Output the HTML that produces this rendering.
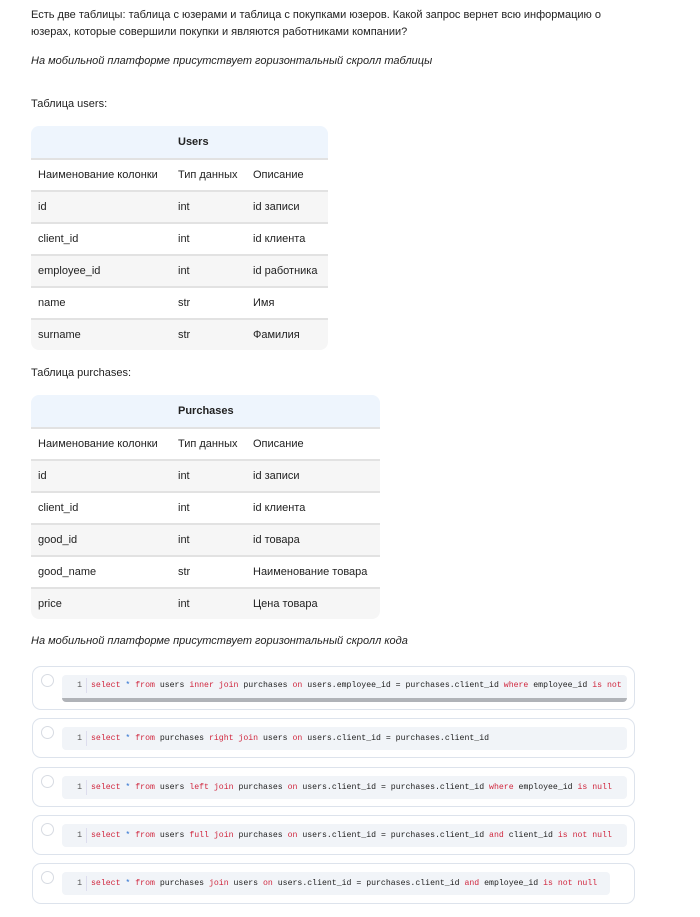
<!DOCTYPE html><html><head><meta charset="utf-8"><style>
body{margin:0;width:700px;height:917px;background:#fff;font-family:"Liberation Sans",sans-serif;color:#222;position:relative;overflow:hidden}
.t{position:absolute;font-size:11px;white-space:nowrap}
.i{font-style:italic}
.tbl{position:absolute;left:31px;border-radius:8px;overflow:hidden}
.row{position:relative;height:30px;border-top:2px solid #e2e2e2;font-size:11px}
.row span{position:absolute;top:9px}
.hd{height:32px;background:#eef5fd;border-top:none}
.hd span{font-weight:bold}
.g{background:#f6f6f6}
.card{position:absolute;left:32px;width:601px;border:1.5px solid #dde3ec;border-radius:9px;background:#fff}
.rad{position:absolute;left:8px;top:7px;width:11px;height:11px;border:1.5px solid #d7dbe2;border-radius:50%}
.code{position:absolute;left:29px;right:7px;top:8px;height:23px;background:#f1f4f8;border-radius:4px;font-family:"Liberation Mono",monospace;font-size:8.2px;line-height:23px;white-space:nowrap;overflow:hidden;color:#222}
.code .n{display:inline-block;width:20px;text-align:right;color:#555;padding-right:4px;border-right:1px solid #dde;margin-right:4px;line-height:15px}
.k{color:#d0263d}.s{color:#2a6fd0}
</style></head><body>
<div class="t" style="left:31px;top:7px;line-height:17px">Есть две таблицы: таблица с юзерами и таблица с покупками юзеров. Какой запрос вернет всю информацию о<br>юзерах, которые совершили покупки и являются работниками компании?</div>
<div class="t i" style="left:31px;top:55px">На мобильной платформе присутствует горизонтальный скролл таблицы</div>
<div class="t" style="left:31px;top:98px">Таблица users:</div>
<div class="tbl" style="top:126px;width:297px">
<div class="row hd"><span style="left:147px;top:10px">Users</span></div>
<div class="row"><span style="left:7px">Наименование колонки</span><span style="left:147px">Тип данных</span><span style="left:222px">Описание</span></div>
<div class="row g"><span style="left:7px">id</span><span style="left:147px">int</span><span style="left:222px">id записи</span></div>
<div class="row"><span style="left:7px">client_id</span><span style="left:147px">int</span><span style="left:222px">id клиента</span></div>
<div class="row g"><span style="left:7px">employee_id</span><span style="left:147px">int</span><span style="left:222px">id работника</span></div>
<div class="row"><span style="left:7px">name</span><span style="left:147px">str</span><span style="left:222px">Имя</span></div>
<div class="row g"><span style="left:7px">surname</span><span style="left:147px">str</span><span style="left:222px">Фамилия</span></div>
</div>
<div class="t" style="left:31px;top:367px">Таблица purchases:</div>
<div class="tbl" style="top:395px;width:349px">
<div class="row hd"><span style="left:147px;top:10px">Purchases</span></div>
<div class="row"><span style="left:7px">Наименование колонки</span><span style="left:147px">Тип данных</span><span style="left:222px">Описание</span></div>
<div class="row g"><span style="left:7px">id</span><span style="left:147px">int</span><span style="left:222px">id записи</span></div>
<div class="row"><span style="left:7px">client_id</span><span style="left:147px">int</span><span style="left:222px">id клиента</span></div>
<div class="row g"><span style="left:7px">good_id</span><span style="left:147px">int</span><span style="left:222px">id товара</span></div>
<div class="row"><span style="left:7px">good_name</span><span style="left:147px">str</span><span style="left:222px">Наименование товара</span></div>
<div class="row g"><span style="left:7px">price</span><span style="left:147px">int</span><span style="left:222px">Цена товара</span></div>
</div>
<div class="t i" style="left:31px;top:635px">На мобильной платформе присутствует горизонтальный скролл кода</div>

<div class="card" style="top:666px;height:42px"><div class="rad"></div><div class="code" style="height:27px;border-bottom:4px solid #b0b3b8;box-sizing:border-box;line-height:22px"><span class="n">1</span><span class="k">select</span> <span class="s">*</span> <span class="k">from</span> users <span class="k">inner join</span> purchases <span class="k">on</span> users.employee_id = purchases.client_id <span class="k">where</span> employee_id <span class="k">is not</span> null</div></div>
<div class="card" style="top:718px;height:38px"><div class="rad"></div><div class="code"><span class="n">1</span><span class="k">select</span> <span class="s">*</span> <span class="k">from</span> purchases <span class="k">right join</span> users <span class="k">on</span> users.client_id = purchases.client_id</div></div>
<div class="card" style="top:767px;height:38px"><div class="rad"></div><div class="code"><span class="n">1</span><span class="k">select</span> <span class="s">*</span> <span class="k">from</span> users <span class="k">left join</span> purchases <span class="k">on</span> users.client_id = purchases.client_id <span class="k">where</span> employee_id <span class="k">is null</span></div></div>
<div class="card" style="top:815px;height:38px"><div class="rad"></div><div class="code"><span class="n">1</span><span class="k">select</span> <span class="s">*</span> <span class="k">from</span> users <span class="k">full join</span> purchases <span class="k">on</span> users.client_id = purchases.client_id <span class="k">and</span> client_id <span class="k">is not null</span></div></div>
<div class="card" style="top:863px;height:39px"><div class="rad"></div><div class="code" style="right:24px"><span class="n">1</span><span class="k">select</span> <span class="s">*</span> <span class="k">from</span> purchases <span class="k">join</span> users <span class="k">on</span> users.client_id = purchases.client_id <span class="k">and</span> employee_id <span class="k">is not null</span></div></div>
</body></html>
